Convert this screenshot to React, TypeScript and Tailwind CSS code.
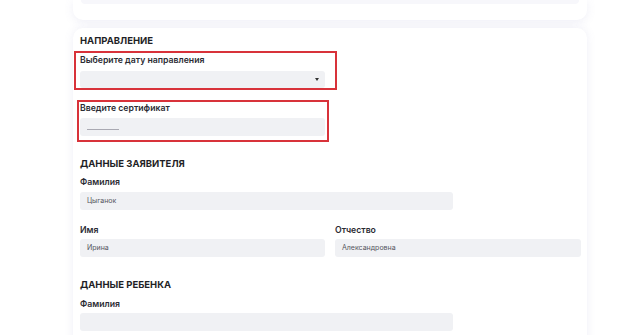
import React from "react";

const Label = ({ children, className = "" }: { children: React.ReactNode; className?: string }) => (
  <div className={`text-[8.7px] leading-[12px] font-semibold text-[#2b2b33] ${className}`}>{children}</div>
);

const Heading = ({ children, className = "" }: { children: React.ReactNode; className?: string }) => (
  <div className={`text-[9.5px] leading-[12px] font-bold text-[#1f1f26] uppercase ${className}`}>{children}</div>
);

const Field = ({ value, className = "" }: { value?: string; className?: string }) => (
  <div className={`h-[18px] rounded-[3px] bg-[#f0f1f4] flex items-center pl-[7px] text-[7px] text-[#55555e] ${className}`}>
    {value}
  </div>
);

export default function App() {
  return (
    <div
      className="w-[628px] h-[335px] overflow-hidden bg-white pl-[73px]"
      style={{ fontFamily: "Inter, 'Noto Sans', sans-serif" }}
    >
      <div className="w-[514px] h-[20px] bg-white rounded-b-[10px] shadow-[0_2px_10px_rgba(120,120,190,0.12)] px-[8px]">
        <div className="h-[4px] bg-[#f7f7fb] rounded-b-[6px]" />
      </div>
      <div className="mt-[8px] w-[514px] h-[400px] bg-white rounded-t-[10px] shadow-[0_0_10px_rgba(120,120,190,0.12)] pl-[7px] pt-[7px]">
        <Heading>Направление</Heading>
        <div className="mt-[4px] ml-[-6px] w-[263px] border-2 border-[#d8323a] pl-[4px] pt-[1px] pb-0">
          <Label>Выберите дату направления</Label>
          <div className="mt-[5px] w-[245px] h-[17px] rounded-[3px] bg-[#f0f1f4] flex items-center justify-end pr-[6px]">
            <div className="w-0 h-0 border-l-[2.5px] border-r-[2.5px] border-t-[3px] border-l-transparent border-r-transparent border-t-[#333]" />
          </div>
        </div>
        <div className="mt-[10px] ml-[-3px] w-[252px] border-2 border-[#d8323a] pl-[1px] pb-[4px]">
          <Label>Введите сертификат</Label>
          <div className="mt-[4px] w-[245px] h-[18px] rounded-[3px] bg-[#f0f1f4] flex items-center pl-[7px]">
            <div className="mt-[4px] w-[32px] h-px bg-[#a9a9b2]" />
          </div>
        </div>
        <Heading className="mt-[16px]">Данные заявителя</Heading>
        <Label className="mt-[6px]">Фамилия</Label>
        <Field value="Цыганок" className="mt-[4px] w-[373px]" />
        <div className="mt-[14px] grid grid-cols-[245px_246px] gap-x-[10px]">
          <div>
            <Label>Имя</Label>
            <Field value="Ирина" className="mt-[3px]" />
          </div>
          <div>
            <Label>Отчество</Label>
            <Field value="Александровна" className="mt-[3px]" />
          </div>
        </div>
        <Heading className="mt-[22px]">Данные ребенка</Heading>
        <Label className="mt-[7px]">Фамилия</Label>
        <Field className="mt-[3px] w-[373px]" />
      </div>
    </div>
  );
}
